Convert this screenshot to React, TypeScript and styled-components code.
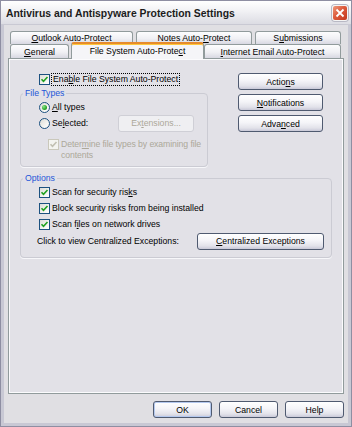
import React from 'react';
import styled, { createGlobalStyle, css } from 'styled-components';

const GlobalStyle = createGlobalStyle`
  html, body {
    margin: 0;
    padding: 0;
    background: #e0dfe3;
  }
  body {
    font-family: 'Liberation Sans', Arial, sans-serif;
    font-size: 8.7px;
    color: #000;
  }
  * {
    box-sizing: border-box;
  }
`;

const Window = styled.div`
  width: 352px;
  height: 427px;
  display: flex;
  flex-direction: column;
  border: 1px solid #8e8ea2;
  background: #e0dfe3;
`;

const TitleBar = styled.div`
  height: 24px;
  display: flex;
  align-items: center;
  justify-content: space-between;
  padding: 1px 3px 0 5px;
  background: linear-gradient(#ffffff 0%, #f1f1f4 45%, #dcdce3 100%);
  border-bottom: 1px solid #c9c9d3;
`;

const Title = styled.div`
  font-weight: bold;
  font-size: 10.4px;
  color: #1c1c1c;
  white-space: nowrap;
`;

const CloseButton = styled.div`
  width: 16px;
  height: 16px;
  border-radius: 3px;
  border: 1px solid #f4f4f4;
  background: linear-gradient(135deg, #ee9a7c 0%, #dd5a3c 45%, #c2371f 100%);
  display: flex;
  align-items: center;
  justify-content: center;
  box-shadow: 0 0 0 1px #b8b8c4;
`;

const Body = styled.div`
  flex: 1;
  display: flex;
  flex-direction: column;
  border-style: solid;
  border-color: #c8c8d4;
  border-width: 0 3px 3px 3px;
  padding: 0 4px;
  min-height: 0;
`;

const TabStrip = styled.div`
  display: flex;
  flex-direction: column;
  padding: 6px 0 0 2px;
`;

const TabRow = styled.div<{ $h: number }>`
  display: flex;
  align-items: flex-end;
  height: ${p => p.$h}px;
`;

const Tab = styled.div<{ $w: number; $ml?: number; $active?: boolean }>`
  width: ${p => p.$w}px;
  margin-left: ${p => p.$ml || 0}px;
  height: 100%;
  display: flex;
  align-items: center;
  justify-content: center;
  white-space: nowrap;
  border: 1px solid #919b9c;
  border-bottom: none;
  border-radius: 3px 3px 0 0;
  background: linear-gradient(#fdfdfe 0%, #f0f0f4 55%, #d8d8e2 100%);
  ${p =>
    p.$active &&
    css`
      position: relative;
      z-index: 1;
      height: calc(100% + 3px);
      margin-bottom: -1px;
      padding-bottom: 2px;
      border-top: 2px solid #e68b2c;
      box-shadow: inset 0 1px 0 #ffc83c;
      background: #f5f5f8;
    `}
`;

const Panel = styled.div`
  flex: 1;
  display: flex;
  flex-direction: column;
  border: 1px solid #919b9c;
  background: #e2e1e7;
  box-shadow: inset 1px 1px 0 #fbfbfd, inset -1px -1px 0 #fbfbfd;
  padding: 13px 11px 0 11px;
`;

const TopArea = styled.div`
  display: flex;
  justify-content: space-between;
  align-items: flex-start;
`;

const LeftCol = styled.div`
  width: 188px;
  display: flex;
  flex-direction: column;
`;

const RightCol = styled.div`
  display: flex;
  flex-direction: column;
  gap: 4px;
  margin: 1px 9px 0 0;
`;

const Row = styled.div<{ $h?: number; $pl?: number }>`
  display: flex;
  align-items: center;
  height: ${p => p.$h || 16}px;
  padding-left: ${p => p.$pl || 0}px;
  white-space: nowrap;
`;

const WrapRow = styled.div<{ $pl: number }>`
  display: flex;
  align-items: flex-start;
  padding-left: ${p => p.$pl}px;
  margin-top: 8px;
  line-height: 11px;
  color: #aca899;
  white-space: nowrap;
  letter-spacing: -0.1px;
`;

const Group = styled.fieldset<{ $mt?: number; $pb: number }>`
  margin: ${p => p.$mt || 0}px 0 0 0;
  padding: 0 0 ${p => p.$pb}px 0;
  min-width: 0;
  border: 1px solid #cbcbd3;
  border-radius: 4px;
  box-shadow: 0 1px 0 #f7f7fa;
`;

const Legend = styled.legend`
  color: #1d56d8;
  padding: 0 2px;
  margin-left: 2px;
  line-height: 11px;
`;

const Button = styled.div<{ $w: number; $ml?: string; $mr?: number; $default?: boolean; $disabled?: boolean }>`
  width: ${p => p.$w}px;
  height: 17px;
  flex-shrink: 0;
  margin-left: ${p => p.$ml || '0'};
  margin-right: ${p => p.$mr || 0}px;
  display: flex;
  align-items: center;
  justify-content: center;
  border: 1px solid #4f5a70;
  border-radius: 3px;
  background: linear-gradient(#ffffff 0%, #f4f4f8 45%, #e2e2ea 80%, #c9c9d8 100%);
  white-space: nowrap;
  ${p =>
    p.$default &&
    css`
      box-shadow: inset 0 0 0 1px #b4c8ee;
    `}
  ${p =>
    p.$disabled &&
    css`
      border-color: #cfcfd6;
      background: #efeff2;
      color: #aca899;
    `}
`;

const BoxWrap = styled.div<{ $disabled?: boolean; $round?: boolean }>`
  width: 11px;
  height: 11px;
  flex-shrink: 0;
  border: 1px solid ${p => (p.$disabled ? '#cac8bb' : '#1c5180')};
  border-radius: ${p => (p.$round ? '50%' : '0')};
  background: ${p =>
    p.$disabled ? '#f4f4f0' : 'linear-gradient(135deg, #dcdcd7 0%, #f4f4f0 60%, #ffffff 100%)'};
  display: flex;
  align-items: center;
  justify-content: center;
  margin-right: 2px;
`;

const Dot = styled.div`
  width: 5px;
  height: 5px;
  border-radius: 50%;
  background: radial-gradient(circle at 35% 35%, #8ae68a 0%, #2aa52a 60%, #1d7e1d 100%);
`;

const Focus = styled.span`
  outline: 1px dotted #000;
  padding: 0 1px;
  line-height: 11px;
`;

const Footer = styled.div`
  display: flex;
  justify-content: flex-end;
  gap: 7px;
  padding: 7px 0 5px 0;
`;

const Check = ({ disabled }: { disabled?: boolean }) => (
  <BoxWrap $disabled={disabled}>
    <svg width="9" height="9" viewBox="0 0 9 9">
      <path
        d="M1.5 4.2 L3.5 6.3 L7.5 2"
        fill="none"
        stroke={disabled ? '#c2c0b2' : '#21a121'}
        strokeWidth="1.6"
      />
    </svg>
  </BoxWrap>
);

const Radio = ({ checked }: { checked?: boolean }) => (
  <BoxWrap $round>{checked && <Dot />}</BoxWrap>
);

export default function App() {
  return (
    <>
      <GlobalStyle />
      <Window>
        <TitleBar>
          <Title>Antivirus and Antispyware Protection Settings</Title>
          <CloseButton>
            <svg width="10" height="10" viewBox="0 0 10 10">
              <path d="M1.5 1.5 L8.5 8.5 M8.5 1.5 L1.5 8.5" stroke="#fff" strokeWidth="1.8" />
            </svg>
          </CloseButton>
        </TitleBar>
        <Body>
          <TabStrip>
            <TabRow $h={13}>
              <Tab $w={123}>
                <span><u>O</u>utlook Auto-Protect</span>
              </Tab>
              <Tab $w={116} $ml={3}>
                <span>Notes Auto-<u>P</u>rotect</span>
              </Tab>
              <Tab $w={86} $ml={3}>
                <span>S<u>u</u>bmissions</span>
              </Tab>
            </TabRow>
            <TabRow $h={14}>
              <Tab $w={59}>
                <span><u>G</u>eneral</span>
              </Tab>
              <Tab $w={133} $ml={2} $active>
                <span>File System Auto-Prote<u>c</u>t</span>
              </Tab>
              <Tab $w={137}>
                <span><u>I</u>nternet Email Auto-Protect</span>
              </Tab>
            </TabRow>
          </TabStrip>
          <Panel>
            <TopArea>
              <LeftCol>
                <Row $h={14} $pl={19}>
                  <Check />
                  <Focus>Ena<u>b</u>le File System Auto-Protect</Focus>
                </Row>
                <Group $mt={2} $pb={5}>
                  <Legend>File Types</Legend>
                  <Row $pl={18}>
                    <Radio checked />
                    <span><u>A</u>ll types</span>
                  </Row>
                  <Row $pl={18}>
                    <Radio />
                    <span>Se<u>l</u>ected:</span>
                    <Button $w={76} $ml="auto" $mr={13} $disabled>
                      <span>Ex<u>t</u>ensions...</span>
                    </Button>
                  </Row>
                  <WrapRow $pl={27}>
                    <Check disabled />
                    <span>
                      Deter<u>m</u>ine file types by examining file
                      <br />
                      contents
                    </span>
                  </WrapRow>
                </Group>
              </LeftCol>
              <RightCol>
                <Button $w={85}>
                  <span>Actio<u>n</u>s</span>
                </Button>
                <Button $w={85}>
                  <span><u>N</u>otifications</span>
                </Button>
                <Button $w={85}>
                  <span>Adva<u>n</u>ced</span>
                </Button>
              </RightCol>
            </TopArea>
            <Group $mt={6} $pb={7}>
              <Legend>Options</Legend>
              <Row $pl={18}>
                <Check />
                <span>Scan for security ris<u>k</u>s</span>
              </Row>
              <Row $pl={18}>
                <Check />
                <span>Block security risks from being installed</span>
              </Row>
              <Row $pl={18}>
                <Check />
                <span>Scan f<u>i</u>les on network drives</span>
              </Row>
              <Row $h={18} $pl={16}>
                <span>Click to view Centralized Exceptions:</span>
                <Button $w={127} $ml="auto" $mr={7}>
                  <span><u>C</u>entralized Exceptions</span>
                </Button>
              </Row>
            </Group>
          </Panel>
          <Footer>
            <Button $w={59} $default>OK</Button>
            <Button $w={59}>Cancel</Button>
            <Button $w={59}>Help</Button>
          </Footer>
        </Body>
      </Window>
    </>
  );
}
